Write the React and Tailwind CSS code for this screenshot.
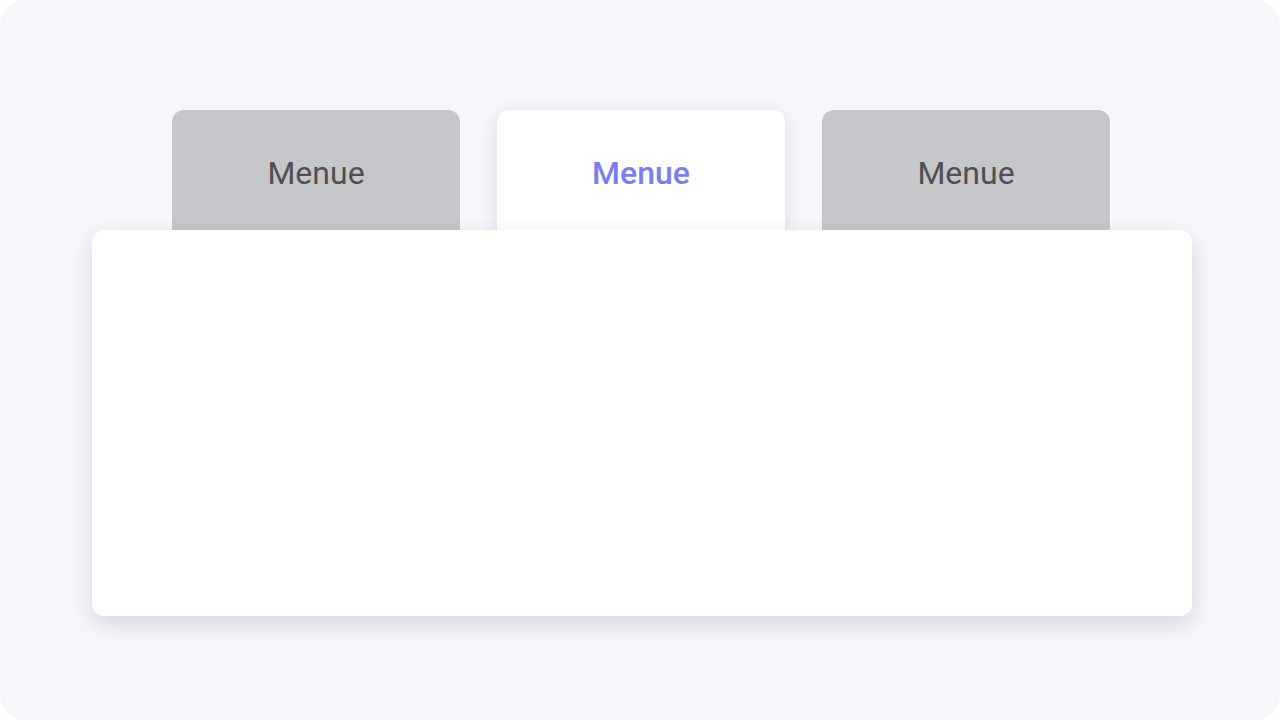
import { useState } from "react";

const tabs = ["Menue", "Menue", "Menue"];

export default function App() {
  const [active, setActive] = useState(1);

  return (
    <div className="w-[1280px] h-[720px] bg-white">
      <div className="w-full h-full rounded-[24px] bg-[#f6f7fb] pt-[110px] font-['Roboto',sans-serif]">
        <div className="flex justify-center gap-[37px] pl-[2px]">
          {tabs.map((label, i) => (
            <button
              key={i}
              onClick={() => setActive(i)}
              className={
                i === active
                  ? "w-[288px] h-[130px] -mb-[10px] rounded-[12px] bg-white text-[#7b7ef2] font-medium text-[32px] shadow-[0_4px_18px_rgba(20,20,50,0.12)] pb-[4px]"
                  : "w-[288px] h-[130px] -mb-[10px] rounded-[12px] bg-[#c6c7cb] text-[#505052] text-[32px] pb-[4px]"
              }
            >
              {label}
            </button>
          ))}
        </div>
        <div className="relative z-10 mx-auto w-[1100px] h-[386px] rounded-[12px] bg-white shadow-[0_8px_22px_rgba(20,20,50,0.14)] translate-x-[2px]" />
      </div>
    </div>
  );
}
